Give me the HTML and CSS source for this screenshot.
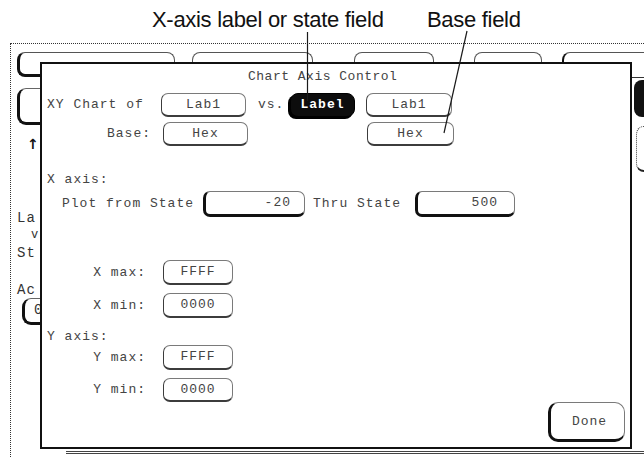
FILE: index.html
```html
<!DOCTYPE html>
<html lang="en">
<head>
    <meta charset="UTF-8">
    <meta name="viewport" content="width=device-width, initial-scale=1.0">
    <title>Chart Axis Control</title>
    <link rel="stylesheet" href="styles.css">
</head>
<body>
    <header class="callouts">
        <span class="callout callout-axis">X-axis label or state field</span>
        <span class="callout">Base field</span>
    </header>

    <!-- leader lines from the callouts down to their fields -->
    <svg class="leaders" width="644" height="457" viewBox="0 0 644 457">
        <line x1="307.5" y1="32" x2="307.5" y2="101" />
        <line x1="467" y1="31" x2="444" y2="133" />
    </svg>

    <main class="screen">
        <!-- menu tabs of the screen behind the dialog -->
        <div class="tabs">
            <span class="tab tab-first"></span>
            <span class="tab tab-second"></span>
            <span class="tab tab-third"></span>
            <span class="tab tab-fourth"></span>
            <span class="tab tab-fifth"></span>
        </div>

        <div class="side-left">
            <span class="side-btn"></span>
            <span class="side-arrow">&#8593;</span>
            <span class="side-text">La</span>
            <span class="side-text side-v">v</span>
            <span class="side-text side-st">St</span>
            <span class="side-text side-ac">Ac</span>
            <span class="side-btn side-btn-low">0</span>
        </div>

        <section class="dialog">
            <div class="title">Chart Axis Control</div>

            <div class="row row-xy">
                <span class="lbl lbl-xy">XY Chart of</span>
                <span class="field field-xlabel">Lab1</span>
                <span class="lbl lbl-vs">vs.</span>
                <span class="field field-on">Label</span>
                <span class="field field-ylabel">Lab1</span>
            </div>

            <div class="row row-base">
                <span class="lbl lbl-base">Base:</span>
                <span class="field field-xbase">Hex</span>
                <span class="field field-ybase">Hex</span>
            </div>

            <div class="heading heading-x">X axis:</div>

            <div class="row row-plot">
                <span class="lbl lbl-from">Plot from State</span>
                <span class="field field-state field-from">-20</span>
                <span class="lbl lbl-thru">Thru State</span>
                <span class="field field-state field-thru">500</span>
            </div>

            <div class="row row-range row-xmax">
                <span class="lbl lbl-range">X max:</span>
                <span class="field field-range">FFFF</span>
            </div>
            <div class="row row-range row-xmin">
                <span class="lbl lbl-range">X min:</span>
                <span class="field field-range">0000</span>
            </div>

            <div class="heading heading-y">Y axis:</div>

            <div class="row row-range row-ymax">
                <span class="lbl lbl-range">Y max:</span>
                <span class="field field-range">FFFF</span>
            </div>
            <div class="row row-range row-ymin">
                <span class="lbl lbl-range">Y min:</span>
                <span class="field field-range">0000</span>
            </div>

            <button class="done">Done</button>
        </section>

        <div class="side-right">
            <span class="side-rule"></span>
            <span class="side-on"></span>
            <span class="side-off"></span>
        </div>

        <div class="bottom-rule"></div>
    </main>
</body>
</html>
```

FILE: styles.css
```css
* {
    box-sizing: border-box;
}

body {
    margin: 0;
    width: 644px;
    height: 457px;
    overflow: hidden;
    position: relative;
    background-color: #fff;
    font-family: "Liberation Mono", "DejaVu Sans Mono", monospace;
}

/* callout labels above the screen */
.callouts {
    display: flex;
    height: 43px;
    padding: 9px 0 0 152px;
    font-family: "Liberation Sans", Arial, sans-serif;
    font-size: 22px;
    line-height: 22px;
    letter-spacing: -0.3px;
    color: #111;
}

.callout-axis {
    width: 275px;
}

.leaders {
    position: absolute;
    top: 0;
    left: 0;
    z-index: 5;
    pointer-events: none;
}

.leaders line {
    stroke: #1a1a1a;
    stroke-width: 1.2;
}

/* the instrument screen */
.screen {
    display: grid;
    grid-template-columns: 29px 592px 1fr;
    grid-template-rows: 18px 387px 1fr;
    height: 414px;
    margin-left: 10px;
    border-left: 1px dotted #333;
    border-top: 1px dotted #333;
}

.tabs {
    grid-column: 1 / -1;
    grid-row: 1 / 3;
    align-self: start;
    display: flex;
    align-items: flex-start;
    padding: 8px 0 0 6px;
}

.tab {
    flex: none;
    height: 22px;
    border: 1px solid #555;
    border-bottom: none;
    border-radius: 8px 8px 0 0;
}

.tab-first {
    width: 158px;
    height: 25px;
    border-left: 3px solid #111;
    border-bottom: 3px solid #111;
    border-radius: 8px 8px 0 8px;
}

.tab-second {
    width: 121px;
    margin-left: 17px;
}

.tab-third {
    width: 80px;
    margin-left: 41px;
}

.tab-fourth {
    width: 68px;
    margin-left: 40px;
}

.tab-fifth {
    width: 100px;
    margin-left: 20px;
    border-left: 2px solid #111;
}

.side-left {
    grid-column: 1;
    grid-row: 2;
    display: flex;
    flex-direction: column;
    align-items: flex-start;
    padding-left: 6px;
    font-size: 14px;
    line-height: 14px;
    letter-spacing: 1px;
    color: #333;
}

.side-btn {
    flex: none;
    width: 40px;
    height: 37px;
    margin-top: 26px;
    border: 1px solid #666;
    border-left: 3px solid #111;
    border-bottom: 3px solid #111;
    border-radius: 9px 0 0 9px;
}

.side-arrow {
    margin: 12px 0 0 10px;
    font-family: "DejaVu Sans", sans-serif;
    font-weight: bold;
    color: #111;
}

.side-text {
    margin-top: 60px;
}

.side-v {
    margin: 3px 0 0 14px;
    font-size: 12px;
}

.side-st {
    margin-top: 4px;
}

.side-ac {
    margin-top: 23px;
}

.side-btn-low {
    width: 30px;
    height: 27px;
    margin: 1px 0 0 5px;
    padding: 4px 0 0 9px;
}

/* the dialog window */
.dialog {
    grid-column: 2;
    grid-row: 2;
    z-index: 1;
    display: flex;
    flex-direction: column;
    background-color: #fff;
    border: 2px solid #111;
    color: #444;
    font-size: 13px;
    line-height: 14px;
    letter-spacing: 1px;
}

.title {
    margin-top: 6px;
    padding-left: 206px;
    letter-spacing: 0.5px;
}

.row {
    flex: none;
    display: flex;
    align-items: center;
}

.lbl {
    flex: none;
    white-space: pre;
}

.field {
    flex: none;
    display: flex;
    align-items: center;
    justify-content: center;
    height: 100%;
    border: 1px solid #7a7a7a;
    border-bottom: 2px solid #3c3c3c;
    border-left-color: #3c3c3c;
    border-radius: 7px;
}

.row-xy {
    height: 24px;
    margin-top: 9px;
    padding-left: 5px;
}

.lbl-xy {
    width: 114px;
}

.field-xlabel {
    width: 85px;
}

.lbl-vs {
    width: 32px;
    margin-left: 12px;
}

.field-on {
    width: 65px;
    background-color: #0d0d0d;
    border: 1px solid #000;
    box-shadow: -2px 2px 0 #000;
    color: #fff;
    font-weight: bold;
    border-radius: 8px;
}

.field-ylabel {
    width: 86px;
    margin-left: 11px;
}

.row-base {
    height: 24px;
    margin-top: 5px;
}

.lbl-base {
    width: 121px;
    padding-right: 12px;
    text-align: right;
}

.field-xbase {
    width: 85px;
}

.field-ybase {
    width: 87px;
    margin-left: 119px;
}

.heading {
    flex: none;
    padding-left: 5px;
}

.heading-x {
    margin-top: 27px;
}

.heading-y {
    margin-top: 12px;
}

.row-plot {
    height: 26px;
    margin-top: 4px;
}

.lbl-from {
    width: 161px;
    padding-left: 20px;
}

.field-state {
    justify-content: flex-end;
    border-left: 3px solid #111;
    border-bottom: 3px solid #111;
}

.field-from {
    width: 102px;
    padding-right: 13px;
}

.lbl-thru {
    width: 102px;
    margin-left: 8px;
}

.field-thru {
    width: 100px;
    padding-right: 16px;
}

.row-range {
    height: 25px;
}

.lbl-range {
    width: 121px;
    padding-right: 17px;
    text-align: right;
}

.field-range {
    width: 70px;
}

.row-xmax {
    margin-top: 43px;
}

.row-xmin {
    margin-top: 8px;
}

.row-ymax {
    margin-top: 1px;
}

.row-ymin {
    height: 24px;
    margin-top: 8px;
}

.done {
    flex: none;
    align-self: flex-end;
    width: 77px;
    height: 40px;
    margin: auto 5px 5px 0;
    padding: 0 0 0 4px;
    background-color: #fff;
    border: 1px solid #7a7a7a;
    border-left: 3px solid #111;
    border-bottom: 3px solid #111;
    border-radius: 10px;
    font-family: inherit;
    font-size: 13px;
    letter-spacing: 1px;
    color: #444;
}

.side-right {
    grid-column: 3;
    grid-row: 2;
    display: flex;
    flex-direction: column;
}

.side-rule {
    margin-top: 15px;
    border-top: 1px solid #333;
}

.side-on {
    height: 37px;
    margin: 2px 0 0 2px;
    background-color: #111;
    border-radius: 8px 0 0 8px;
}

.side-off {
    height: 46px;
    margin: 9px 0 0 4px;
    border: 1px dotted #444;
    border-right: none;
    border-bottom: 2px solid #222;
    border-radius: 8px 0 0 8px;
}

.bottom-rule {
    grid-column: 1 / -1;
    grid-row: 3;
    margin: 2px 0 0 55px;
    border-top: 3px double #444;
}
```
